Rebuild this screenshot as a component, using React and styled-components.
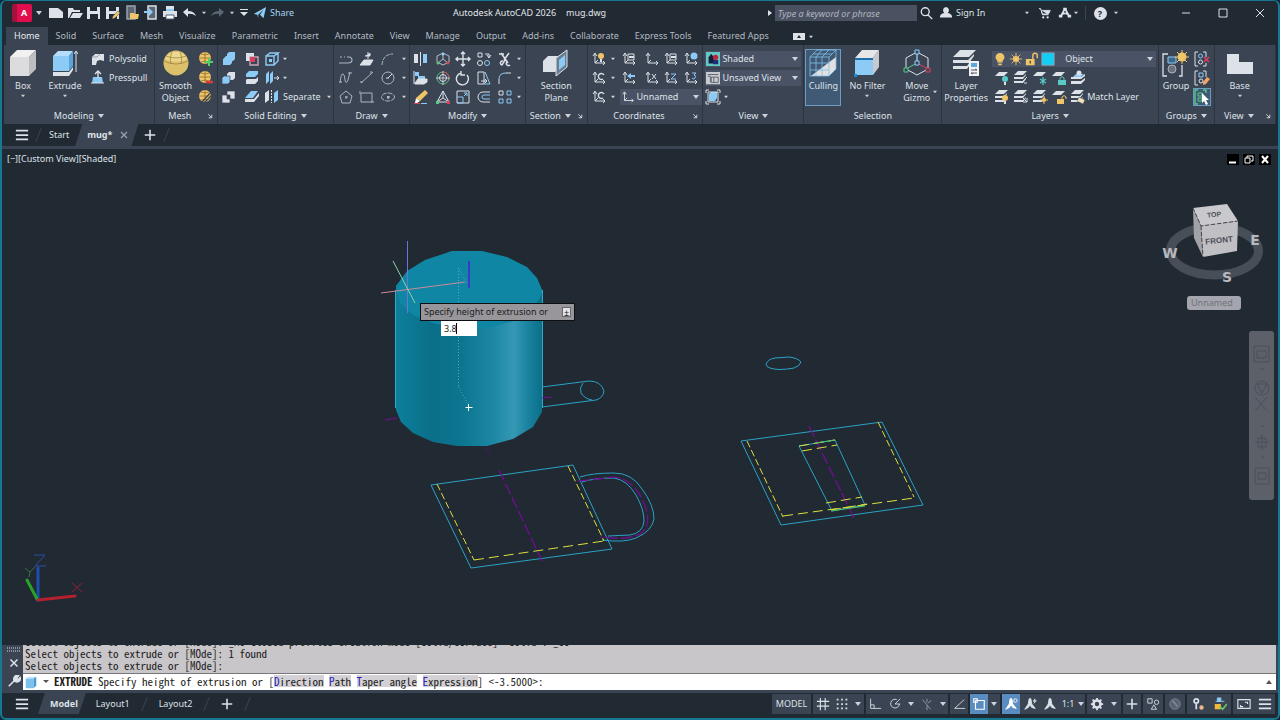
import styled, { createGlobalStyle, css } from "styled-components";

const L = "#dde1e8";
const B = "#8ccbf6";
const Y = "#f0c568";
const G = "#56c987";
const R = "#d9405f";
const D = "#3b4453";

const axes = (
  <path d="M4 3v9h10M2 5l2-3 2 3M12 10l2 2-2 2M4 12l3-3" fill="none" stroke={L} />
);
const sheet = (y, c = L) => <path d={`M5 ${y}h9l-4 4H1z`} fill={c} />;
const sheets = (
  <path d="M5 1h9l-4 4H1zM1 7h9l3-3v1l-3 4H1zM1 11h9l3-3v1l-3 4H1z" fill={L} />
);
const ball = (
  <>
    <circle cx="7" cy="7" r="6" fill={Y} />
    <path d="M1 7h12M7 1v12M3 3q4 2 8 0M3 11q4-2 8 0" fill="none" stroke="#8b6d2b" strokeWidth=".8" />
  </>
);

const icons = {
  newFile: <path d="M1 3h9l5 4v6H1z" fill={L} />,
  open: <path d="M1 3h5l1 2h6v2H5l-3 6H1zM6 8h10l-3 5H3z" fill={L} />,
  save: <path d="M1 2h13v12H1zM4 2v4h7V2zM4 9v5h8V9z" fill={L} fillRule="evenodd" />,
  saveAs: (
    <>
      <path d="M1 2h13v12H1zM4 2v4h7V2zM4 9v5h8V9z" fill={L} fillRule="evenodd" />
      <path d="M7 14l1-3 5-5 2 2-5 5z" fill={Y} stroke={D} strokeWidth=".5" />
    </>
  ),
  openWeb: (
    <>
      <path d="M3 1h8v13H3z" fill="#5d6675" stroke="#9aa2af" strokeWidth="1.5" />
      <path d="M6 8h4l1 1h4l-1 5H6z" fill={Y} />
    </>
  ),
  saveWeb: (
    <>
      <path d="M5 1h8v13H5z" fill="#5d6675" stroke={L} strokeWidth="1.5" />
      <path d="M1 6h5V3l4 4-4 4V8H1z" fill={B} />
    </>
  ),
  plot: (
    <>
      <path d="M4 1h8v4H4zM1 6h14v6H1z" fill={L} />
      <path d="M4 10h8v4H4z" fill="#fff" stroke="#4c6079" />
      <path d="M4 5h8" stroke={B} strokeWidth="2" />
    </>
  ),
  undo: <path d="M2 7l5-4v3q6 0 8 5-4-3-8-2v3z" fill={L} />,
  redo: <path d="M14 7L9 3v3q-6 0-8 5 4-3 8-2v3z" fill="#5a6474" />,
  more: <path d="M4 4h8v1H4zM4 7h8l-4 4z" fill={L} />,
  send: <path d="M1 9L15 1l-3 13-4-4 4-6-6 6v4L5 10z" fill={B} />,
  search: <path d="M6 2a4 4 0 100 9 4 4 0 000-9zM9 10l5 5" fill="none" stroke={L} strokeWidth="1.6" />,
  user: <path d="M8 1a4 4 0 00-2 7q-5 1-5 5h14q0-4-5-5a4 4 0 00-2-7z" fill={L} />,
  cart: (
    <>
      <path d="M1 3h2l2 7h7M4 5h10l-2 4H5z" fill={L} stroke={L} />
      <circle cx="6" cy="13" r="1.3" fill={L} />
      <circle cx="11" cy="13" r="1.3" fill={L} />
    </>
  ),
  apps: (
    <>
      <path d="M8 3L3 12M8 3l5 9M4 10q4-3 8 0" fill="none" stroke={L} strokeWidth="2" />
      <path d="M6 2h4v3H6zM1 10h4v3H1zM11 10h4v3h-4z" fill={L} />
    </>
  ),
  polysolid: (
    <>
      <path d="M2 6l3-3h9v7l-4-1-3 1-1 4H2z" fill={L} />
      <path d="M2 6h5l3-3" stroke="#9aa1ac" fill="none" />
    </>
  ),
  presspull: (
    <>
      <path d="M3 7h9l1 6H2z" fill={B} />
      <path d="M8 8V1M5 4l3-3 3 3" stroke={L} fill="none" strokeWidth="1.4" />
      <path d="M1 13h13" stroke={L} />
    </>
  ),
  meshMore: <>{ball}<path d="M11 7v8M7 11h8" stroke="#4fd06a" strokeWidth="2" /></>,
  meshLess: <>{ball}<path d="M8 12h7" stroke="#e03a3a" strokeWidth="2.4" /></>,
  meshRefine: <>{ball}<path d="M3 14L14 2M6 14l8-8" stroke={D} strokeWidth="1.2" /></>,
  union: <path d="M2 8l3-3h1V3l2-2h6v7l-2 2h-1v2l-2 2H2z" fill={B} />,
  subtract: (
    <>
      <path d="M2 2h8v8H2z" fill={L} />
      <path d="M6 6h8v8H6z" fill="none" stroke="#c9a5b5" strokeWidth="1.4" />
      <path d="M6 6h5v5H6z" fill={R} />
    </>
  ),
  edge: (
    <>
      <path d="M2 5h8v9H2zM2 5l4-3h8l-4 3M14 2v8l-4 4" fill="none" stroke={B} strokeWidth="1.4" />
      <path d="M5 8h3v3H5z" fill={B} />
    </>
  ),
  intersect: (
    <>
      <path d="M6 4l2-2h6v6l-2 2H6z" fill={L} />
      <path d="M1 8l2-2h6v6l-2 2H1z" fill={B} stroke={D} strokeWidth=".7" />
    </>
  ),
  slice: (
    <>
      <path d="M2 4l3-3h9v3l-3 3H2z" fill={B} />
      <path d="M2 10l1-1h9l2-2v4l-3 3H2z" fill={L} />
    </>
  ),
  shell: (
    <>
      <path d="M2 4l3-3v10l-3 3zM6 4l3-3v10l-3 3z" fill={B} />
      <path d="M10 8h5M13 6l2 2-2 2" fill="none" stroke={L} />
    </>
  ),
  interfere: (
    <>
      <path d="M6 2h8v8H6zM1 6h8v8H1z" fill={L} stroke={D} strokeWidth=".7" />
      <path d="M6 6h3v4H6z" fill={D} />
    </>
  ),
  thicken: (
    <>
      <path d="M1 9l6-7h7l-5 7z" fill={B} />
      <path d="M1 10h9l5-6v3l-5 6H1z" fill={L} />
    </>
  ),
  separate: (
    <>
      <path d="M1 4l4-3v10l-4 3z" fill={L} />
      <path d="M10 4l4-3v10l-4 3z" fill={B} />
      <path d="M7.500 1v13" stroke={L} strokeDasharray="2 1" />
    </>
  ),
  pline: <path d="M1 12h9q4 0 4-3t-3-3H9M2 6h2M6 6h1" fill="none" stroke="#aeb5c0" strokeWidth="1.1" />,
  planar: <path d="M5 9h9l-3 5H1zM9 1v7M6 5h5V2" fill={L} stroke={L} />,
  arc: <path d="M2 14Q3 3 13 3" fill="none" stroke="#aeb5c0" strokeDasharray="4 1" />,
  spline: <path d="M2 13Q3 3 5 4q2 1 2 6 1 5 3 0l2-8M1 12h3M10 3h4" fill="none" stroke="#aeb5c0" />,
  line: <path d="M2 13L14 2M1 12h3M12 1v3" stroke="#aeb5c0" fill="none" />,
  circle: (
    <>
      <circle cx="8" cy="8" r="6" fill="none" stroke="#aeb5c0" />
      <path d="M8 8l4-4M6 8h3" stroke={L} />
    </>
  ),
  polygon: <path d="M8 2l6 5-2 7H4L2 7zM8 7v3M7 8h3" fill="none" stroke="#aeb5c0" />,
  rect: <path d="M2 4h11v9H2zM1 2v3M12 13h3" fill="none" stroke="#aeb5c0" />,
  ellipse: (
    <>
      <ellipse cx="8" cy="8" rx="6.500" ry="4" fill="none" stroke="#aeb5c0" strokeDasharray="5 1" />
      <path d="M8 7v3M7 8h3" stroke={L} />
    </>
  ),
  mirror: (
    <>
      <path d="M1 3h4v9H1z" fill={L} />
      <path d="M10 3h4v9h-4z" fill={B} />
      <path d="M7.500 1v14" stroke={L} />
    </>
  ),
  gizmoMove: (
    <>
      <path d="M8 2l6 3v6l-6 3-6-3V5zM8 8V3M8 8l-5 4M8 8l5 4" fill="none" stroke="#b6bcc6" />
      <circle cx="8" cy="3" r="1.5" fill={B} />
      <circle cx="3" cy="12" r="1.5" fill={G} />
      <circle cx="13" cy="12" r="1.5" fill={R} />
    </>
  ),
  move: <path d="M8 1v14M1 8h14M6 3l2-2 2 2M6 13l2 2 2-2M3 6L1 8l2 2M13 6l2 2-2 2" fill="none" stroke={L} strokeWidth="1.4" />,
  copy: (
    <>
      <path d="M2 2h4v4H2zM9 3h4v3M11 4l2 3 2-3" fill="none" stroke={L} />
      <circle cx="4" cy="12" r="2.500" fill="none" stroke={L} />
      <circle cx="11" cy="12" r="2.500" fill="none" stroke={B} />
    </>
  ),
  trim: <path d="M2 3h5M4 2l7 10M12 2L7 9M10 11a2 2 0 103 3M6 10a2 2 0 10-1 4l3-5" fill="none" stroke={L} strokeWidth="1.5" />,
  align: (
    <>
      <path d="M2 2h4v4H2zM5 6h7v3H5z" fill={B} />
      <path d="M1 1v13M2 13l3-4h9v3l-3 2H2z" fill={L} stroke={L} />
    </>
  ),
  gizmoRotate: (
    <>
      <circle cx="8" cy="8" r="6" fill="none" stroke={G} />
      <circle cx="8" cy="8" r="3.500" fill="none" stroke={L} />
      <path d="M8 1v14M1 8h14" stroke={L} strokeWidth=".8" />
      <path d="M8 2a6 6 0 016 6" stroke={R} fill="none" />
    </>
  ),
  rotate: <path d="M6 3a6 6 0 106 2M6 1v4h4" fill="none" stroke={L} strokeWidth="1.4" />,
  stretch: (
    <>
      <path d="M2 2h6v12H2zM5 11h6M9 9l2 2-2 2" fill="none" stroke={L} />
      <path d="M9 2l5 12H8" fill="none" stroke={B} />
    </>
  ),
  fillet: (
    <>
      <path d="M2 14V9" stroke={L} />
      <path d="M2 9q0-6 7-6" stroke={B} fill="none" />
      <path d="M9 3h5" stroke={L} />
    </>
  ),
  erase: (
    <>
      <path d="M3 9l9-8 3 3-8 8z" fill={Y} />
      <path d="M3 9l4 3-3 2H2z" fill="#fff" />
      <path d="M1 14.500h6" stroke={R} />
      <path d="M8 14.500h6" stroke={B} />
    </>
  ),
  gizmoScale: (
    <>
      <path d="M8 2L2 13h12zM8 9V2M8 9l-6 4M8 9l6 4" fill="none" stroke={L} />
      <path d="M1 12h3v3H1z" fill={G} />
      <path d="M12 12h3v3h-3z" fill={R} />
    </>
  ),
  scale: (
    <>
      <path d="M2 2h12v12H2z" fill="none" stroke={L} />
      <path d="M2 8h6v6H2M9 7l3-3M9 4h3v3" fill="none" stroke={B} />
    </>
  ),
  offset: (
    <>
      <path d="M14 3H7a5 5 0 000 10h7" fill="none" stroke={L} />
      <path d="M14 6H8a2 2 0 000 4h6" fill="none" stroke={B} />
    </>
  ),
  array: (
    <>
      <path d="M2 2h4v4H2z" fill="none" stroke={L} />
      <path d="M10 2h4v4h-4zM2 10h4v4H2zM10 10h4v4h-4z" fill="none" stroke={B} />
    </>
  ),
  ucs: axes,
  ucsWorld: <>{axes}<circle cx="11" cy="5" r="3.500" fill={B} /></>,
  ucsIcon: <>{axes}<circle cx="10" cy="5" r="3" fill={Y} /><path d="M9 8h2v3H9z" fill={L} /></>,
  ucsPrev: <>{axes}<path d="M6 6l4-3v2h4v2h-4v2z" fill={B} /></>,
  ucsFace: <>{axes}<path d="M7 3h6v6H7z" fill="none" stroke={L} /><path d="M8 5h5v2H8z" fill={L} /></>,
  ucsTurn: <>{axes}<path d="M13 5a3 3 0 10-1 4" fill="none" stroke={L} strokeWidth="1.4" /></>,
  ucsX: <>{axes}<path d="M8 4l4 5M12 4L8 9" stroke={L} /></>,
  ucsZ: <>{axes}<path d="M8 4h5L8 9h5" fill="none" stroke={B} /></>,
  ucs3: <>{axes}<path d="M9 3h4l-2 2q3 1 1 3t-3 0" fill="none" stroke={B} /></>,
  shaded: (
    <>
      <path d="M0 0h16v16H0z" fill="#63c8c4" />
      <path d="M3 13V6l3-4 3 4v7z" fill="#161c3c" />
      <circle cx="11" cy="6" r="3" fill="#c1203b" />
      <path d="M8 9h6v5H8z" fill="#1c2f74" />
    </>
  ),
  namedView: (
    <>
      <path d="M0 1h16v14H0z" fill="#c9cbd0" />
      <path d="M2 4h12M2 6h3v7M6 7h8v6H6zM9 7v6" fill="none" stroke="#555c68" />
    </>
  ),
  zoomObj: (
    <>
      <path d="M4 5l2-2h6v6l-2 3H4z" fill={B} />
      <path d="M4 1H1v3M12 1h3v3M1 12v3h3M15 12v3h-3M3 3h10v10H3z" fill="none" stroke={L} />
    </>
  ),
  bulb: <path d="M8 1a5 5 0 00-3 9v2h6v-2a5 5 0 00-3-9zM6 13h4v2H6z" fill={Y} />,
  sun: (
    <>
      <circle cx="8" cy="8" r="3.500" fill={Y} />
      <path d="M8 1v14M1 8h14M3 3l10 10M13 3L3 13" stroke={Y} />
    </>
  ),
  unlock: (
    <>
      <path d="M1 8h10v7H1z" fill={Y} />
      <path d="M9 8V4a2.500 2.500 0 015 0v3" fill="none" stroke={Y} strokeWidth="1.600" />
      <path d="M6 10v3" stroke={D} strokeWidth="1.5" />
    </>
  ),
  swatch: <path d="M1 1h14v14H1z" fill="#14cdf5" stroke="#8fa3b5" />,
  layOff: <>{sheet(2)}<circle cx="11" cy="9" r="3" fill="#57c9c6" /><path d="M10 12h2v3h-2z" fill={L} /></>,
  layIso: <>{sheets}<path d="M8 13l6-6M11 13h3" stroke={L} /></>,
  layFreeze: <>{sheet(2)}<path d="M11 7v8M8 9l6 4M14 9l-6 4" stroke="#57c9c6" strokeWidth="1.300" /></>,
  layLock: <>{sheet(2)}<path d="M7 10h8v5H7z" fill="#57c9c6" /><path d="M9 10V8q2-3 4 0v2" fill="none" stroke="#57c9c6" /></>,
  layCurrent: (
    <>
      <path d="M1 11h10l4-3v2l-4 4H1zM1 7h10l4-3v2l-4 3H1z" fill={L} />
      <path d="M3 7l3-3h8l-3 3z" fill={B} />
      <circle cx="9" cy="3" r="2.500" fill={L} />
    </>
  ),
  layOn: <>{sheets}<circle cx="11" cy="9" r="3" fill={Y} /><path d="M10 12h2v3h-2z" fill={L} /></>,
  layUniso: <>{sheets}<path d="M9 8l5 5M14 9v4h-4" stroke={L} fill="none" /></>,
  layThaw: <>{sheets}<circle cx="12" cy="11" r="2" fill={Y} /><path d="M12 7v8M8 11h8" stroke={Y} /></>,
  layUnlock: <>{sheet(2)}<path d="M6 10h7v5H6z" fill={Y} /><path d="M11 10V8q2-3 4 0v2" fill="none" stroke={Y} /></>,
  layMatch: <>{sheets}<path d="M9 8l6 3-2 4-6-3z" fill="#f1e3bd" stroke={D} strokeWidth=".5" /></>,
  ungroup: (
    <>
      <path d="M4 1H1v14h3M9 1h3v5M9 15h3v-3" fill="none" stroke={L} />
      <circle cx="6.500" cy="5" r="2" fill="none" stroke={B} />
      <circle cx="6.500" cy="11" r="2" fill="none" stroke={L} />
      <path d="M10 6l5 5M15 6l-5 5" stroke={R} strokeWidth="1.600" />
    </>
  ),
  groupEdit: (
    <>
      <path d="M4 1H1v14h3M9 1h3v6" fill="none" stroke={L} />
      <path d="M5 3h4v4H5z" fill="none" stroke={B} />
      <circle cx="7" cy="11" r="2" fill="none" stroke={L} />
      <path d="M9 12l4-5 3 2-4 5-3 1z" fill="#f3a368" />
    </>
  ),
  groupSel: (
    <>
      <path d="M4 1H1v14h3M9 1h3v3" fill="none" stroke={G} strokeWidth="1.4" />
      <path d="M4 4h4v3H4zM4 9h4v3H4z" fill="none" stroke={G} />
      <path d="M8 4l7 7h-3l2 4-2 1-2-4-2 2z" fill="#fff" />
    </>
  ),
  grid: <path d="M5 1v14M10.500 1v14M1 5h14M1 10.500h14" stroke={L} fill="none" strokeWidth="1.3" />,
  snap: <path d="M2 3h12M2 8h12M2 13h12" stroke={L} strokeWidth="2" strokeDasharray="2 3" />,
  ortho: <path d="M3 2v11h12M3 9h4v4" stroke={L} fill="none" />,
  polar: <path d="M13 8a5 5 0 11-3-5M8 8l6-6M8 8h6" fill="none" stroke={L} />,
  iso: <path d="M3 3l9 11M8 2v4M8 10v5M13 4l-4 3" fill="none" stroke="#9aa2af" />,
  angle: <path d="M14 3L3 13h12" fill="none" stroke={L} />,
  osnap: <path d="M4 4h10v10H4V4M2 2h4v4H2z" fill="none" stroke="#fff" strokeWidth="1.3" />,
  annot: <path d="M7 2h2l1 6 4 5-4-1-2-3-2 3-4 2 4-6z" fill={L} stroke={L} />,
  annotVis: (
    <>
      <path d="M7 2h2l1 6 4 5-4-1-2-3-2 3-4 2 4-6z" fill="#fff" stroke="#fff" />
      <circle cx="13" cy="4" r="2" fill="#5f8fc4" stroke="#fff" />
    </>
  ),
  annotAuto: (
    <>
      <path d="M7 2h2l1 6 4 5-4-1-2-3-2 3-4 2 4-6z" fill={L} stroke={L} />
      <path d="M14 1l-3 4h2l-1 3 4-4h-2z" fill={L} />
    </>
  ),
  gear: (
    <>
      <circle cx="8" cy="8" r="4" fill="none" stroke={L} strokeWidth="3" />
      <path d="M8 1v3M8 12v3M1 8h3M12 8h3M3 3l2 2M11 11l2 2M13 3l-2 2M3 13l2-2" stroke={L} strokeWidth="2" />
    </>
  ),
  plus: <path d="M8 2v12M2 8h12" stroke={L} strokeWidth="1.800" />,
  isolate: (
    <>
      <path d="M2 2h5v5H2zM6 14l3-5 3 5z" fill="none" stroke={L} />
      <circle cx="12" cy="6" r="2.500" fill="none" stroke={L} />
    </>
  ),
  graphics: (
    <>
      <circle cx="8" cy="8" r="6" fill="#596270" stroke="#7d8592" />
      <path d="M5 4l6 7" stroke="#7d8592" strokeWidth="2" />
    </>
  ),
  feed: (
    <>
      <path d="M6 2a2.500 2.500 0 100 5 2.500 2.500 0 000-5zM6 7v7" fill="none" stroke={L} strokeWidth="2" />
      <circle cx="12" cy="12" r="2.500" fill="#f3b78b" />
    </>
  ),
  trusted: (
    <>
      <path d="M5 1h4v4H5zM3 5h10" fill={B} stroke={B} />
      <path d="M2 8h7v6H2z" fill="#f0b93c" />
      <path d="M8 11l3 3 5-6" fill="none" stroke="#69c46c" strokeWidth="2" />
    </>
  ),
  clean: <path d="M1 3h14v10H1zM9 6h3v2M4 9v2h3" fill="none" stroke={L} strokeWidth="1.3" />,
  menu: <path d="M1 3h14M1 8h14M1 13h14" stroke={L} strokeWidth="2" />,
  close: <path d="M4 4l8 8M12 4l-8 8" stroke={L} strokeWidth="1.700" />,
  closeTab: <path d="M4 4l8 8M12 4l-8 8" stroke="#9aa2af" strokeWidth="1.700" />,
  wrench: <path d="M2 14l6-6M8 8q-1-4 2-6l3 0-2 3 2 1 2-2q1 5-4 5z" fill={L} stroke={L} strokeWidth="1.800" />,
  winMin: <path d="M4 8h8" stroke={L} />,
  winMax: <path d="M4 4h8v8H4z" fill="none" stroke={L} />,
  winClose: <path d="M4 4l8 8M12 4l-8 8" stroke={L} />,
  launch: <path d="M6 6l4 4M10 6.500V10H6.500" fill="none" stroke={L} />,
  cmdBox: (
    <>
      <path d="M2 4l3-2h9l-3 2z" fill="#c3e2f6" />
      <path d="M2 4h9v11H2z" fill="#7cc0ec" />
      <path d="M11 4l3-2v10l-3 3z" fill="#4b9bd2" />
    </>
  ),
};

const bigIcons = {
  box: (
    <>
      <path d="M1 8l7-7h19l-7 7z" fill="#f1f1f2" />
      <path d="M1 8h19v19H1z" fill="#dcdcde" />
      <path d="M20 8l7-7v19l-7 7z" fill="#bdbec2" />
    </>
  ),
  extrude: (
    <>
      <path d="M2 7l5-5h15l-4 5z" fill="#b4defa" />
      <path d="M2 7h16v15H2z" fill={B} />
      <path d="M18 7l4-5v15l-4 5z" fill="#5aa4dc" />
      <path d="M2 23h16l4-5v3l-4 6H2z" fill={L} />
      <path d="M25 23V3M23 5l2-3 2 3" fill="none" stroke={L} />
    </>
  ),
  smooth: (
    <>
      <circle cx="14" cy="14" r="12.500" fill="#dcc06a" />
      <path d="M3 10a12 12 0 0122 0q-11 5-22 0z" fill="#ecd78e" />
      <path d="M2 12q12 6 24 0M10 2q-3 7-1 13M18 2q3 7 1 13M4 7q10 4 20 0" fill="none" stroke="#a3863d" strokeWidth=".8" />
    </>
  ),
  section: (
    <>
      <path d="M1 12l5-5h12v12l-5 4H1z" fill={L} />
      <path d="M14 9l11-8v17l-11 9z" fill="#6a7d90" stroke={L} />
      <path d="M17 11l6-5v10l-6 5z" fill={B} />
    </>
  ),
  culling: (
    <>
      <path d="M2 27L27 8v12l-7 7z" fill="#e1e1e3" />
      <path d="M1 8h19v19H1zM1 8l7-7h19l-7 7M27 1v19l-7 7M7 8v19M13 8v19M1 14h19M1 21h19M7 8l6-7M13 8l7-7M4 5h19" fill="none" stroke="#80bfe9" strokeWidth=".8" />
    </>
  ),
  noFilter: (
    <>
      <path d="M2 9l7-8h17l-6 8z" fill="#e6e6e8" />
      <path d="M20 9l6-8v17l-6 8z" fill="#c8c9cd" />
      <path d="M2 9h18v17H2z" fill={B} />
      <path d="M2 10h18" stroke="#1e6ea8" strokeWidth="2" />
      <path d="M1 25h3v3H1z" fill="#1d87d8" />
    </>
  ),
  gizmo: (
    <>
      <path d="M14 3l11 6v11l-11 6-11-6V9z" fill="none" stroke={L} />
      <path d="M14 14V4" stroke={B} strokeWidth="1.4" />
      <path d="M14 14L3 20" stroke={G} />
      <path d="M14 14l11 6" stroke={R} />
      <path d="M12 1h4v4h-4zM12 12h4v4h-4z" fill={D} stroke={B} />
      <path d="M1 19h4v4H1z" fill={D} stroke={G} />
      <path d="M23 19h4v4h-4z" fill={D} stroke={R} />
    </>
  ),
  layers: (
    <>
      <path d="M8 1h16l-7 7H1zM1 11h15l6-6v2l-5 7H1zM1 17h14l3-4v3l-3 4H1z" fill={L} />
      <path d="M17 12h10v15H17z" fill="#f2f2f3" />
      <path d="M19 14h6v4h-6z" fill="#5ba8e0" />
      <path d="M19 21h6M19 24h6M23 20l2 1M21 25l-2-1" stroke="#555d69" />
    </>
  ),
  group: (
    <>
      <path d="M6 5H1v22h4M17 27h3V16" fill="none" stroke={L} strokeWidth="1.300" />
      <path d="M6 8h8v6H6z" fill="#3c668a" stroke={B} />
      <circle cx="10" cy="20" r="4" fill="#6c727d" stroke="#aeb3bb" />
      <circle cx="20" cy="8" r="4.500" fill={Y} />
      <path d="M20 1v14M13 8h14M15 3l10 10M25 3L15 13" stroke={Y} />
    </>
  ),
  base: <path d="M1 5h12v8h14v12H1z" fill={L} />,
};

const Icon = ({ name, size = 16 }) => (
  <svg width={size} height={size} viewBox="0 0 16 16" aria-hidden="true">{icons[name]}</svg>
);
const BigIcon = ({ name }) => (
  <svg width="28" height="28" viewBox="0 0 28 28" aria-hidden="true">{bigIcons[name]}</svg>
);
const Caret = ({ size = 6 }) => (
  <svg width={size} height={size} viewBox="0 0 6 6" aria-hidden="true">
    <path d="M0 1h6L3 5z" fill="#cdd2da" />
  </svg>
);

const Arrow = ({ label = "More options" }) => (
  <Plain aria-label={label}><Caret size={4} /></Plain>
);

const ribbonTabs = [
  "Home", "Solid", "Surface", "Mesh", "Visualize", "Parametric", "Insert", "Annotate", "View",
  "Manage", "Output", "Add-ins", "Collaborate", "Express Tools", "Featured Apps",
];

const statusCells = [
  { text: "MODEL", w: 39 },
  { icon: "grid", w: 19, gap: true },
  { icon: "snap", w: 20 },
  { w: 12 },
  { icon: "ortho", w: 18, gap: true },
  { icon: "polar", w: 22 },
  { w: 10 },
  { icon: "iso", w: 22 },
  { w: 10 },
  { icon: "angle", w: 18, gap: true },
  { icon: "osnap", w: 18, gap: true, on: true },
  { w: 12 },
  { icon: "annotVis", w: 18, gap: true, on: true },
  { icon: "annotAuto", w: 20 },
  { icon: "annot", w: 19 },
  { text: "1:1", w: 18 },
  { w: 8 },
  { icon: "gear", w: 20, gap: true },
  { w: 14 },
  { icon: "plus", w: 18, gap: true },
  { icon: "isolate", w: 20, gap: true },
  { icon: "graphics", w: 20, gap: true },
  { icon: "feed", w: 22, gap: true },
  { icon: "trusted", w: 22 },
  { icon: "clean", w: 22, gap: true },
  { icon: "menu", w: 20 },
];

const Tools = ({ names }) =>
  names.map((name, i) =>
    name === "" ? (
      <Arrow key={i} />
    ) : (
      <Plain key={i} aria-label={name}><Icon name={name} /></Plain>
    )
  );

const Large = ({ icon, lines, arrow, on }) => (
  <BigButton $on={on}>
    <BigIcon name={icon} />
    {lines.map((line) => <span key={line}>{line}</span>)}
    {arrow && <Caret size={4} />}
  </BigButton>
);

const RibbonPanel = ({ title, grow, cols, caret, launch, children }) => (
  <Panel $grow={grow}>
    <PanelBody $cols={cols}>{children}</PanelBody>
    <PanelTitle $launch={launch}>
      <button>{title}{caret && <Caret />}</button>
      {launch && <Launcher aria-label={`${title} settings`}><Icon name="launch" size={14} /></Launcher>}
    </PanelTitle>
  </Panel>
);

function TitleBar() {
  return (
    <Title>
      <QuickAccess>
        <Logo aria-label="Application menu">A</Logo>
        <Plain aria-label="Menu"><Caret /></Plain>
        <Tools names={["newFile", "open", "save", "saveAs", "openWeb", "saveWeb", "plot", "undo", "", "redo", "", "more"]} />
        <Share><Icon name="send" size={14} />Share</Share>
      </QuickAccess>
      <Caption><span>Autodesk AutoCAD 2026</span><span>mug.dwg</span></Caption>
      <Account>
        <Plain aria-label="Collapse search">
          <svg width="4" height="6" viewBox="0 0 4 6"><path d="M0 0l4 3-4 3z" fill={L} /></svg>
        </Plain>
        <Search type="text" aria-label="Search" placeholder="Type a keyword or phrase" />
        <Plain aria-label="Find"><Icon name="search" size={14} /></Plain>
        <SignIn><Icon name="user" size={14} />Sign In<Caret size={4} /></SignIn>
        <Plain aria-label="Store"><Icon name="cart" size={14} /></Plain>
        <Plain aria-label="Apps"><Icon name="apps" size={14} /></Plain>
        <Arrow />
        <Divider />
        <Help aria-label="Help">?</Help>
        <Arrow />
      </Account>
      <WindowButtons>
        <Tools names={["winMin", "winMax", "winClose"]} />
      </WindowButtons>
    </Title>
  );
}

function Ribbon() {
  return (
    <RibbonBar>
      <RibbonPanel title="Modeling" grow={151} cols="38px 46px 1fr" caret>
        <Large icon="box" lines={["Box"]} arrow />
        <Large icon="extrude" lines={["Extrude"]} arrow />
        <Stack>
          <TextTool><Icon name="polysolid" />Polysolid</TextTool>
          <TextTool><Icon name="presspull" />Presspull</TextTool>
        </Stack>
      </RibbonPanel>
      <RibbonPanel title="Mesh" grow={63} cols="42px 1fr" launch>
        <Large icon="smooth" lines={["Smooth", "Object"]} />
        <ToolGrid $cols="18px"><Tools names={["meshMore", "meshLess", "meshRefine"]} /></ToolGrid>
      </RibbonPanel>
      <RibbonPanel title="Solid Editing" grow={116} cols="1fr" caret>
        <ToolGrid $cols="22px 24px 16px 10px 38px">
          <Tools names={["union", "subtract", "edge", ""]} /><i />
          <Tools names={["intersect", "slice", "shell", ""]} /><i />
          <Tools names={["interfere", "thicken"]} />
          <WideTool><Icon name="separate" />Separate<Caret size={4} /></WideTool>
        </ToolGrid>
      </RibbonPanel>
      <RibbonPanel title="Draw" grow={76} cols="1fr" caret>
        <ToolGrid $cols="24px 18px 24px 8px">
          <Tools names={["pline", "planar", "arc", "", "spline", "line", "circle", "", "polygon", "rect", "ellipse", ""]} />
        </ToolGrid>
      </RibbonPanel>
      <RibbonPanel title="Modify" grow={116} cols="1fr" caret>
        <ToolGrid $cols="22px 22px 18px 24px 18px 10px">
          <Tools
            names={[
              "mirror", "gizmoMove", "move", "copy", "trim", "",
              "align", "gizmoRotate", "rotate", "stretch", "fillet", "",
              "erase", "gizmoScale", "scale", "offset", "array", "",
            ]}
          />
        </ToolGrid>
      </RibbonPanel>
      <RibbonPanel title="Section" grow={61} cols="1fr" caret launch>
        <Large icon="section" lines={["Section", "Plane"]} />
      </RibbonPanel>
      <RibbonPanel title="Coordinates" grow={116} cols="1fr" launch>
        <ToolGrid $cols="22px 6px 26px 20px 18px 22px">
          <Tools
            names={[
              "ucsIcon", "", "ucsFace", "ucs", "ucsFace", "ucsWorld",
              "ucsTurn", "", "ucsPrev", "ucsX", "ucsZ", "ucs3", "ucsTurn", "",
            ]}
          />
          <WideCell>
            <SelectBox>
              <Icon name="ucs" size={14} />
              <select aria-label="Named UCS"><option>Unnamed</option></select>
              <Caret />
            </SelectBox>
          </WideCell>
        </ToolGrid>
      </RibbonPanel>
      <RibbonPanel title="View" grow={101} cols="1fr" caret>
        <Stack>
          <SelectBox>
            <Icon name="shaded" size={14} />
            <select aria-label="Visual style"><option>Shaded</option></select>
            <Caret />
          </SelectBox>
          <SelectBox>
            <Icon name="namedView" size={14} />
            <select aria-label="Named view"><option>Unsaved View</option></select>
            <Caret />
          </SelectBox>
          <TextTool><Icon name="zoomObj" /><Caret size={4} /></TextTool>
        </Stack>
      </RibbonPanel>
      <RibbonPanel title="Selection" grow={138} cols="38px 50px 1fr">
        <Large icon="culling" lines={["Culling"]} on />
        <Large icon="noFilter" lines={["No Filter"]} arrow />
        <GizmoCell>
          <Large icon="gizmo" lines={["Move", "Gizmo"]} />
          <Arrow />
        </GizmoCell>
      </RibbonPanel>
      <RibbonPanel title="Layers" grow={218} cols="48px 1fr" caret>
        <Large icon="layers" lines={["Layer", "Properties"]} />
        <Stack>
          <LayerSelect>
            <Icon name="bulb" size={14} /><Icon name="sun" size={14} />
            <Icon name="unlock" size={14} /><Icon name="swatch" size={14} />
            <select aria-label="Layer"><option>Object</option></select>
            <Caret />
          </LayerSelect>
          <LayerRow><Tools names={["layOff", "layIso", "layFreeze", "layLock", "layCurrent"]} /></LayerRow>
          <LayerRow>
            <Tools names={["layOn", "layUniso", "layThaw", "layUnlock", "layMatch"]} />
            <TextTool>Match Layer</TextTool>
          </LayerRow>
        </Stack>
      </RibbonPanel>
      <RibbonPanel title="Groups" grow={55} cols="34px 1fr" caret>
        <Large icon="group" lines={["Group"]} />
        <ToolGrid $cols="18px">
          <Tools names={["ungroup", "groupEdit"]} />
          <ActiveTool aria-label="Group selection"><Icon name="groupSel" /></ActiveTool>
        </ToolGrid>
      </RibbonPanel>
      <RibbonPanel title="View" grow={61} cols="50px" caret launch>
        <Large icon="base" lines={["Base"]} arrow />
      </RibbonPanel>
    </RibbonBar>
  );
}

function Drawing() {
  return (
    <Scene viewBox="2 149 1276 495" width="1276" height="495" fill="none">
      <defs>
        <linearGradient id="side" x1="0" x2="1">
          <stop offset="0" stopColor="#0d7f9b" />
          <stop offset=".25" stopColor="#0a6f89" />
          <stop offset=".45" stopColor="#0c7590" />
          <stop offset=".68" stopColor="#1f89a5" />
          <stop offset=".81" stopColor="#3598b4" />
          <stop offset=".9" stopColor="#1a84a0" />
          <stop offset="1" stopColor="#0b6f89" />
        </linearGradient>
      </defs>
      <path d="M396 285V410l5 12 12 11 20 9 24 4h30l26-7 20-12 9-15V290z" fill="url(#side)" />
      <path d="M396 286l11-15 18-11 27-9h30l25 6 20 10 10 11 6 14-10 16-19 13-26 7h-30l-25-5-20-8-13-12z" fill="#0f87a4" />
      <path d="M395.500 290v118M542.500 290v118" stroke="#32a9c9" />
      <path d="M458.500 268v120M458.500 387l10 18M459 269l8 14" stroke="#5aa7b6" strokeDasharray="1 2" />
      <path d="M469 261v27" stroke="#3b39c9" strokeWidth="2" />
      <path d="M407.500 241v72" stroke="#6b74d8" />
      <path d="M381 293l84-11" stroke="#c98a98" />
      <path d="M393 261l22 42" stroke="#8fd4a4" />
      <path d="M465.500 407.500h7M468.500 404v7" stroke="#fff" />
      <path d="M385 420l12-2M542 398l10-1" stroke="#7a0a9c" />
      <path d="M485 447l5 8" stroke="#4a1670" />
      <g stroke="#2aa3c6">
        <path d="M542 387l47-6q12 0 15 10-1 7-8 9l-54 7" />
        <path d="M583 383q-4 5-2 10 4 6 11 7" />
        <path d="M766 364q2-5 9-6l14-1q9 1 12 5-1 4-7 6-16 3-24 0-4-1-4-4z" />
        <path d="M431 485l142-20 39 84-141 19zM580 477q12-4 34-4 18 0 28 16 12 16 12 30-2 12-18 19-12 5-34 2" />
        <path d="M582 482q12-4 32-4 13 2 22 17 8 14 8 26-1 12-14 14l-22 1" />
        <path d="M741 441l141-19 41 83-142 20zM799 446l36-6 30 65-33 6z" />
      </g>
      <g stroke="#7a0a9c" strokeWidth="1.200">
        <path d="M499 470l43 91M578 481l10-1 26-3q20 2 30 26 9 22-4 31-16 7-36 3h-4" strokeDasharray="12 3" />
        <path d="M809 426l46 94" strokeDasharray="12 3" />
      </g>
      <g stroke="#dde03c">
        <path d="M437 484l37 76M568 466l36 75" strokeDasharray="7 3" />
        <path d="M474 560l130-19" strokeDasharray="10 5" />
        <path d="M747 441l36 76M878 422l36 75" strokeDasharray="7 3" />
        <path d="M783 516l131-18M799 446l36-6M802 451l35-6M826 503l36-6M831 510l36-6" strokeDasharray="10 5" />
      </g>
      <path d="M831 511l34-5M815 443l20-3" stroke="#4fc06a" />
      <g strokeLinecap="round" strokeWidth="3">
        <path d="M38 600V568" stroke="#1d4fb0" />
        <path d="M37 599l-10-19" stroke="#28a32a" />
        <path d="M38 600l37-4" stroke="#b5202f" />
      </g>
      <path d="M34 555h11l-10 11h11" stroke="#2a4fa8" />
      <path d="M72 583l10 9M82 583l-10 9" stroke="#8f2234" />
      <path d="M25 568l5 4 5-5M30 572l-1 5" stroke="#387040" />
    </Scene>
  );
}

function ViewCube() {
  return (
    <CubeBox>
      <svg width="120" height="84" viewBox="1154 200 120 84" fill="none">
        <ellipse cx="1214.500" cy="251" rx="44" ry="24" stroke="#474e58" strokeWidth="9" />
        <path d="M1193 208l34-4 11 17-37 5z" fill="#c9c9cd" />
        <path d="M1201 226l37-5-1 30-34 6z" fill="#bfbfc4" />
        <path d="M1193 208l8 18 2 31-9-19z" fill="#a2a3a9" />
        <path d="M1193 208l8 18 37-5M1201 226l2 31" stroke="#44474e" strokeDasharray="4 2" />
        <CubeText x="1214" y="217" $size={7} transform="rotate(-6 1214 214)">TOP</CubeText>
        <CubeText x="1219" y="243" $size={8} transform="rotate(-6 1219 240)">FRONT</CubeText>
        <Compass x="1170" y="258">W</Compass>
        <Compass x="1255" y="245">E</Compass>
        <Compass x="1227" y="282">S</Compass>
      </svg>
      <UcsTag>Unnamed</UcsTag>
    </CubeBox>
  );
}

export default function App() {
  return (
    <AppWindow>
      <GlobalStyle />
      <TitleBar />
      <RibbonTabs>
        {ribbonTabs.map((tab) => <RibbonTab key={tab} $active={tab === "Home"}>{tab}</RibbonTab>)}
        <Collapse aria-label="Minimize ribbon">
          <svg width="12" height="7" viewBox="0 0 12 7"><path d="M0 0h12v7H0z" fill={L} /><path d="M4 5l2-3 2 3z" fill="#222932" /></svg>
          <Caret size={4} />
        </Collapse>
      </RibbonTabs>
      <Ribbon />
      <TabStrip>
        <MenuButton aria-label="Drawings menu"><Icon name="menu" size={14} /></MenuButton>
        <Slash />
        <StripTab>Start</StripTab>
        <StripTab $active>mug*<Icon name="closeTab" size={12} /></StripTab>
        <MenuButton aria-label="New drawing"><Icon name="plus" size={14} /></MenuButton>
        <Slash />
      </TabStrip>
      <Canvas>
        <Drawing />
        <ViewLabels><button>[−]</button><button>[Custom View]</button><button>[Shaded]</button></ViewLabels>
        <DocButtons>
          <button aria-label="Minimize drawing"><svg width="12" height="11"><path d="M2 8.500h7" stroke="#fff" strokeWidth="2" /></svg></button>
          <button aria-label="Restore drawing"><svg width="12" height="11"><path d="M2 4h5v5H2zM4 4V2h6v5H8" fill="none" stroke="#fff" /></svg></button>
          <button aria-label="Close drawing"><svg width="12" height="11"><path d="M3 2l6 7M9 2L3 9" stroke="#fff" strokeWidth="2" /></svg></button>
        </DocButtons>
        <ViewCube />
        <NavBar aria-label="Navigation bar">
          <svg width="25" height="169" viewBox="0 0 25 169" fill="none" stroke="#4a4f59">
            <path d="M5 15h15v16H5zM8 20h9v7H8zM11 38h4M8 53h10l-5 9zM6 66l12 14M18 66L6 80M12 95h3M6 111h14M13 103v16M9 107h8v9H9zM12 126h3M6 137h14v16H6zM9 142h8v6H9z" />
            <circle cx="13" cy="57" r="7" />
          </svg>
        </NavBar>
        <Prompt>
          <label htmlFor="height">Specify height of extrusion or <PromptKey>±</PromptKey></label>
          <Field><input id="height" defaultValue="3.8" size={3} /><b /></Field>
        </Prompt>
      </Canvas>
      <Command>
        <Grip>
          <svg width="14" height="5"><path d="M0 1h14M0 4h14" stroke={L} strokeDasharray="1 1" /></svg>
          <Plain aria-label="Close command line"><Icon name="close" size={14} /></Plain>
          <Plain aria-label="Customize"><Icon name="wrench" size={14} /></Plain>
        </Grip>
        <Console>
          <History>
            <p>Select objects to extrude or [MOde]: _MO Closed profiles creation mode [SOlid/SUrface] &lt;Solid&gt;: _SO</p>
            <p>Select objects to extrude or [MOde]: 1 found</p>
            <p>Select objects to extrude or [MOde]:</p>
          </History>
          <CommandLine>
            <Icon name="cmdBox" size={14} />
            <svg width="6" height="4"><path d="M0 0h6L3 3z" fill="#555" /></svg>
            <p>
              <strong>EXTRUDE</strong> Specify height of extrusion or [<button><i>D</i>irection</button>{" "}
              <button><i>P</i>ath</button> <button><i>T</i>aper angle</button>{" "}
              <button><i>E</i>xpression</button>] &lt;-3.5000&gt;:
            </p>
            <input aria-label="Command" />
            <svg width="6" height="4"><path d="M0 4h6L3 0z" fill="#555" /></svg>
          </CommandLine>
        </Console>
      </Command>
      <StatusBar>
        <LayoutStrip>
          <MenuButton aria-label="Layouts menu"><Icon name="menu" size={14} /></MenuButton>
          <StripTab $active>Model</StripTab>
          <StripTab>Layout1</StripTab>
          <Slash />
          <StripTab>Layout2</StripTab>
          <Slash />
          <MenuButton aria-label="New layout"><Icon name="plus" size={14} /></MenuButton>
          <Slash />
        </LayoutStrip>
        <StatusTools>
          {statusCells.map((c, i) => (
            <StatusCell key={i} $w={c.w} $gap={c.gap} $on={c.on} aria-label={c.text || c.icon || "More options"}>
              {c.text || (c.icon ? <Icon name={c.icon} size={14} /> : <Caret />)}
            </StatusCell>
          ))}
        </StatusTools>
      </StatusBar>
    </AppWindow>
  );
}

const GlobalStyle = createGlobalStyle`
  * { box-sizing: border-box; }
  body {
    margin: 0;
    background: #10293a;
    color: #dfe2e8;
    font: 9px/12px "Noto Sans", sans-serif;
  }
  button, input, select {
    font: inherit;
    color: inherit;
    background: none;
    border: 0;
    padding: 0;
    margin: 0;
    white-space: nowrap;
  }
  svg { flex: none; display: block; }
  p { margin: 0; }
`;

const AppWindow = styled.div`
  display: flex;
  flex-direction: column;
  height: 100vh;
  border: 2px solid #177892;
  border-top-width: 1px;
  border-radius: 6px;
  background: #212932;
  overflow: hidden;
`;

const Plain = styled.button`
  display: flex;
  align-items: center;
  justify-content: center;
`;

const Title = styled.header`
  display: flex;
  align-items: center;
  height: 24px;
  flex: none;
`;

const QuickAccess = styled.div`
  display: grid;
  grid-template-columns: 20px 14px repeat(7, 19px) 20px 9px 19px 9px 16px auto;
  align-items: center;
  padding-left: 10px;
`;

const Logo = styled.button`
  height: 18px;
  border-radius: 2px;
  background: linear-gradient(90deg, #a3123d 25%, #e20d4d 25%);
  color: #fff;
  font-weight: 700;
  padding-left: 4px;
`;

const Share = styled.button`
  display: flex;
  align-items: center;
  gap: 3px;
  padding-left: 1px;
  color: #a9d4f2;
`;

const Caption = styled.div`
  flex: 1;
  display: flex;
  justify-content: center;
  gap: 10px;
  color: #e2e5ea;
`;

const Account = styled.div`
  display: grid;
  grid-template-columns: 10px 142px 20px 94px 28px 12px 10px 8px 22px 10px;
  align-items: center;
`;

const Divider = styled.span`
  width: 1px;
  height: 14px;
  justify-self: center;
  background: #3b4453;
`;

const Search = styled.input`
  height: 16px;
  min-width: 0;
  padding: 0 3px;
  background: #4a5262;
  font-style: italic;
  &::placeholder {
    color: #b1b6c0;
    opacity: 1;
  }
`;

const SignIn = styled.button`
  display: flex;
  align-items: center;
  gap: 3px;
  padding: 0 2px;
  svg:last-child {
    margin-left: auto;
  }
`;

const Help = styled.button`
  width: 13px;
  height: 13px;
  justify-self: center;
  border-radius: 50%;
  background: #dde1e8;
  color: #222932;
  font-weight: 700;
  line-height: 13px;
`;

const WindowButtons = styled.div`
  display: grid;
  grid-template-columns: repeat(3, 37px);
  margin-left: 46px;
`;

const RibbonTabs = styled.nav`
  display: flex;
  align-items: flex-end;
  flex: none;
  height: 20px;
  padding-left: 4px;
`;

const RibbonTab = styled.button`
  height: 18px;
  padding: 0 8px;
  color: #b4bac4;
  ${(p) => p.$active && css`
    background: #3b4453;
    color: #e8ebef;
  `}
`;

const Collapse = styled.button`
  display: flex;
  align-items: center;
  gap: 4px;
  height: 17px;
  margin-left: 16px;
`;

const RibbonBar = styled.div`
  display: flex;
  flex: none;
  margin: 0 2px;
  height: 79px;
  background: #3b4453;
`;

const Panel = styled.section`
  flex: ${(p) => p.$grow} 1 0;
  min-width: 0;
  display: flex;
  flex-direction: column;
  border-right: 1px solid #2c343f;
`;

const PanelBody = styled.div`
  flex: 1;
  display: grid;
  grid-template-columns: ${(p) => p.$cols};
  align-items: start;
  padding-top: 4px;
`;

const PanelTitle = styled.footer`
  position: relative;
  display: flex;
  justify-content: center;
  height: 17px;
  padding-right: ${(p) => (p.$launch ? 12 : 0)}px;
  & > button {
    display: flex;
    align-items: center;
    gap: 4px;
    height: 17px;
  }
`;

const Launcher = styled.button`
  position: absolute;
  right: 0;
`;

const BigButton = styled.button`
  display: flex;
  flex-direction: column;
  align-items: center;
  line-height: 12px;
  min-height: 57px;
  svg + span {
    margin-top: 3px;
  }
  span + svg {
    margin-top: 2px;
  }
  ${(p) => p.$on && css`
    margin: 0 1px;
    background: #405a75;
    box-shadow: inset 0 0 0 1px #6b9cc4;
  `}
`;

const Stack = styled.div`
  display: grid;
  grid-template-rows: repeat(3, 19px);
  align-items: center;
  padding: 0 2px;
`;

const TextTool = styled.button`
  display: flex;
  align-items: center;
  gap: 3px;
`;

const ToolGrid = styled.div`
  display: grid;
  grid-template-columns: ${(p) => p.$cols};
  grid-auto-rows: 19px;
  align-items: center;
`;

const WideTool = styled(TextTool)`
  grid-column: 3 / -1;
  svg:last-child {
    margin-left: 3px;
  }
`;

const WideCell = styled.div`
  grid-column: 3 / -1;
  padding-left: 4px;
`;

const SelectBox = styled.div`
  display: flex;
  align-items: center;
  gap: 2px;
  height: 16px;
  padding: 0 3px 0 1px;
  background: #4a5366;
  select {
    flex: 1;
    min-width: 0;
    appearance: none;
  }
`;

const LayerSelect = styled(SelectBox)`
  select {
    padding-left: 8px;
  }
`;

const GizmoCell = styled.div`
  display: flex;
  align-items: flex-end;
  justify-content: center;
  gap: 2px;
  padding-left: 6px;
  & > button:last-child {
    height: 28px;
  }
`;

const LayerRow = styled.div`
  display: grid;
  grid-template-columns: repeat(5, 19px) auto;
  justify-content: start;
`;

const ActiveTool = styled(Plain)`
  height: 18px;
  background: #405a75;
  box-shadow: inset 0 0 0 1px #6b9cc4;
`;

const TabStrip = styled.nav`
  display: flex;
  align-items: center;
  flex: none;
  height: 25px;
  padding-left: 8px;
  border-bottom: 3px solid #3b4453;
`;

const LayoutStrip = styled(TabStrip)`
  height: 21px;
  gap: 4px;
  border-bottom: 0;
`;

const MenuButton = styled(Plain)`
  width: 24px;
`;

const Slash = styled.span`
  width: 1px;
  height: 14px;
  margin: 0 4px;
  background: #3b4453;
  transform: skewX(-22deg);
`;

const StripTab = styled.button`
  display: flex;
  align-items: center;
  gap: 6px;
  align-self: stretch;
  padding: 0 6px;
  ${(p) => p.$active && css`
    padding: 0 8px 0 12px;
    font-weight: 700;
    background: #3b4453;
    clip-path: polygon(7px 0, 100% 0, calc(100% - 7px) 100%, 0 100%);
  `}
`;

const Canvas = styled.main`
  position: relative;
  flex: 1;
  min-height: 0;
  overflow: hidden;
`;

const Scene = styled.svg`
  position: absolute;
  left: 0;
  top: 0;
`;

const ViewLabels = styled.div`
  position: absolute;
  left: 5px;
  top: 4px;
`;

const DocButtons = styled.div`
  position: absolute;
  right: 7px;
  top: 5px;
  display: flex;
  gap: 4px;
  button {
    background: #000;
  }
`;

const CubeBox = styled.div`
  position: absolute;
  right: 4px;
  top: 51px;
  display: flex;
  flex-direction: column;
  align-items: center;
  gap: 12px;
`;

const CubeText = styled.text`
  font: 700 ${(p) => p.$size}px "Liberation Sans", sans-serif;
  fill: #4d5058;
  text-anchor: middle;
`;

const Compass = styled.text`
  font: 700 14px "DejaVu Sans", sans-serif;
  fill: #b6b9bf;
  text-anchor: middle;
`;

const UcsTag = styled.button`
  width: 54px;
  height: 14px;
  border-radius: 3px;
  background: #a5a5ad;
  color: #70727b;
  text-align: left;
  padding-left: 4px;
`;

const NavBar = styled.aside`
  position: absolute;
  right: 4px;
  top: 182px;
  border-radius: 3px;
  background: #5b6069;
`;

const Prompt = styled.div`
  position: absolute;
  left: 418px;
  top: 154px;
  color: #1c1d20;
  label {
    display: flex;
    justify-content: space-between;
    align-items: center;
    width: 155px;
    height: 18px;
    padding: 0 3px;
    background: #98969b;
    border: 1px solid #0d0f12;
  }
`;

const PromptKey = styled.span`
  width: 9px;
  height: 10px;
  line-height: 9px;
  text-align: center;
  background: #e5e5e7;
  border: 1px solid #66686e;
`;

const Field = styled.div`
  display: flex;
  align-items: center;
  width: 36px;
  height: 15px;
  margin-left: 21px;
  padding-left: 3px;
  background: #fff;
  input {
    width: 12px;
    outline: none;
  }
  b {
    width: 1px;
    height: 11px;
    background: #000;
  }
`;

const Command = styled.section`
  display: flex;
  flex: none;
  padding: 0 2px 3px;
  background: #3b4453;
`;

const Grip = styled.div`
  width: 19px;
  display: flex;
  flex-direction: column;
  align-items: center;
  justify-content: space-between;
  padding: 2px 0;
`;

const Console = styled.div`
  flex: 1;
  color: #1d1d20;
  font: 11px/12px "Noto Sans Mono CJK SC", "Liberation Mono", monospace;
  white-space: pre;
`;

const History = styled.div`
  display: flex;
  flex-direction: column;
  justify-content: flex-end;
  height: 29px;
  padding: 0 2px 2px;
  overflow: hidden;
  background: #c9c6ca;
  border-bottom: 1px solid #77767b;
`;

const CommandLine = styled.div`
  display: flex;
  align-items: center;
  gap: 5px;
  height: 16px;
  padding: 0 4px 0 1px;
  background: #fff;
  p {
    padding-bottom: 2px;
  }
  button {
    background: #d3d1d5;
  }
  i {
    font-style: normal;
    color: #2a1fc0;
  }
  input {
    flex: 1;
    outline: none;
  }
`;

const StatusBar = styled.footer`
  display: flex;
  justify-content: space-between;
  align-items: flex-start;
  flex: none;
  height: 25px;
`;

const StatusTools = styled.div`
  display: flex;
  padding: 1px 3px 0 0;
`;

const StatusCell = styled.button`
  display: flex;
  align-items: center;
  justify-content: center;
  width: ${(p) => p.$w}px;
  height: 20px;
  margin-left: ${(p) => (p.$gap ? 2 : 0)}px;
  background: ${(p) => (p.$on ? "#5b8cc0" : "#3b4453")};
`;
